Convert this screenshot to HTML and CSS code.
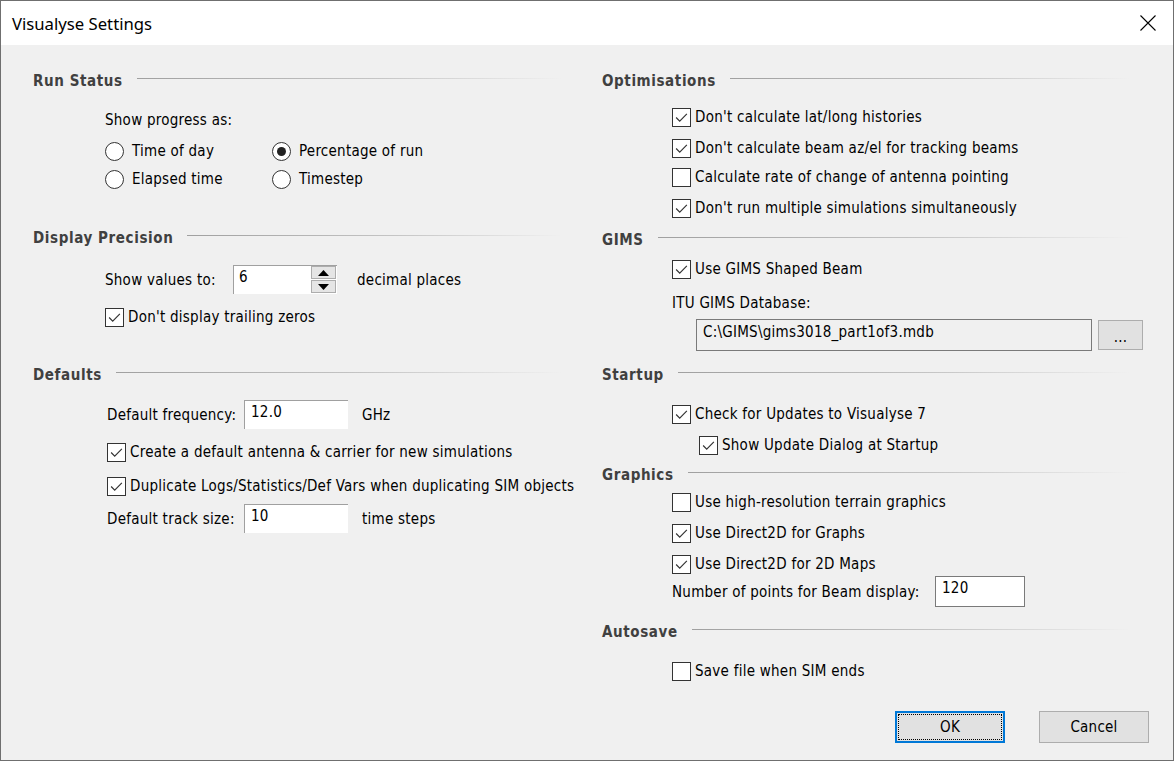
FILE: index.html
```html
<!DOCTYPE html>
<html>
<head>
<meta charset="utf-8">
<title>Visualyse Settings</title>
<link rel="stylesheet" href="styles.css">
</head>
<body>
<div class="window">
  <div class="titlebar">
    <span class="title">Visualyse Settings</span>
    <svg class="close" width="16" height="16" viewBox="0 0 16 16"><path d="M0.5 0.5 L15.5 15.5 M15.5 0.5 L0.5 15.5" stroke="#000" stroke-width="1.1" fill="none"/></svg>
  </div>
  <div class="content">
    <div class="col left">
      <div class="header h-first"><span>Run Status</span><i class="rule"></i></div>
      <div class="row prompt">Show progress as:</div>
      <div class="radio-grid">
        <label class="radio"><span class="circle"></span>Time of day</label>
        <label class="radio"><span class="circle on"></span>Percentage of run</label>
        <label class="radio"><span class="circle"></span>Elapsed time</label>
        <label class="radio"><span class="circle"></span>Timestep</label>
      </div>

      <div class="header h-precision"><span>Display Precision</span><i class="rule"></i></div>
      <div class="field-row values-row">
        <span class="lab lab-values">Show values to:</span>
        <div class="spin">
          <span class="spin-val">6</span>
          <div class="spin-btns">
            <span class="sb"><svg width="11" height="6" viewBox="0 0 11 6"><path d="M5.5 0 L11 6 L0 6 Z" fill="#000"/></svg></span>
            <span class="sb"><svg width="11" height="6" viewBox="0 0 11 6"><path d="M0 0 L11 0 L5.5 6 Z" fill="#000"/></svg></span>
          </div>
        </div>
        <span class="unit unit-dec">decimal places</span>
      </div>
      <label class="cb-row trailing"><span class="box"><svg viewBox="0 0 19 19"><path d="M3.5 9.5 L7.5 13.5 L15.5 5.5" class="tick"/></svg></span>Don't display trailing zeros</label>

      <div class="header h-defaults"><span>Defaults</span><i class="rule"></i></div>
      <div class="defaults">
        <div class="field-row freq-row">
          <span class="lab lab-def">Default frequency:</span>
          <div class="edit sunken">12.0</div>
          <span class="unit">GHz</span>
        </div>
        <label class="cb-row def-cb1"><span class="box"><svg viewBox="0 0 19 19"><path d="M3.5 9.5 L7.5 13.5 L15.5 5.5" class="tick"/></svg></span>Create a default antenna &amp; carrier for new simulations</label>
        <label class="cb-row def-cb2"><span class="box"><svg viewBox="0 0 19 19"><path d="M3.5 9.5 L7.5 13.5 L15.5 5.5" class="tick"/></svg></span>Duplicate Logs/Statistics/Def Vars when duplicating SIM objects</label>
        <div class="field-row track-row">
          <span class="lab lab-def">Default track size:</span>
          <div class="edit sunken">10</div>
          <span class="unit">time steps</span>
        </div>
      </div>
    </div>

    <div class="col right">
      <div class="header h-first"><span>Optimisations</span><i class="rule"></i></div>
      <div class="rbody">
        <label class="cb-row opt1"><span class="box"><svg viewBox="0 0 19 19"><path d="M3.5 9.5 L7.5 13.5 L15.5 5.5" class="tick"/></svg></span>Don't calculate lat/long histories</label>
        <label class="cb-row opt2"><span class="box"><svg viewBox="0 0 19 19"><path d="M3.5 9.5 L7.5 13.5 L15.5 5.5" class="tick"/></svg></span>Don't calculate beam az/el for tracking beams</label>
        <label class="cb-row opt3"><span class="box"></span>Calculate rate of change of antenna pointing</label>
        <label class="cb-row opt4"><span class="box"><svg viewBox="0 0 19 19"><path d="M3.5 9.5 L7.5 13.5 L15.5 5.5" class="tick"/></svg></span>Don't run multiple simulations simultaneously</label>
      </div>

      <div class="header h-gims"><span>GIMS</span><i class="rule"></i></div>
      <div class="rbody">
        <label class="cb-row gims-cb"><span class="box"><svg viewBox="0 0 19 19"><path d="M3.5 9.5 L7.5 13.5 L15.5 5.5" class="tick"/></svg></span>Use GIMS Shaped Beam</label>
        <div class="row itu">ITU GIMS Database:</div>
        <div class="path-row">
          <div class="path">C:\GIMS\gims3018_part1of3.mdb</div>
          <span class="browse">...</span>
        </div>
      </div>

      <div class="header h-startup"><span>Startup</span><i class="rule"></i></div>
      <div class="rbody">
        <label class="cb-row st1"><span class="box"><svg viewBox="0 0 19 19"><path d="M3.5 9.5 L7.5 13.5 L15.5 5.5" class="tick"/></svg></span>Check for Updates to Visualyse 7</label>
        <label class="cb-row st2"><span class="box"><svg viewBox="0 0 19 19"><path d="M3.5 9.5 L7.5 13.5 L15.5 5.5" class="tick"/></svg></span>Show Update Dialog at Startup</label>
      </div>

      <div class="header h-graphics"><span>Graphics</span><i class="rule"></i></div>
      <div class="rbody">
        <label class="cb-row gr1"><span class="box"></span>Use high-resolution terrain graphics</label>
        <label class="cb-row gr2"><span class="box"><svg viewBox="0 0 19 19"><path d="M3.5 9.5 L7.5 13.5 L15.5 5.5" class="tick"/></svg></span>Use Direct2D for Graphs</label>
        <label class="cb-row gr3"><span class="box"><svg viewBox="0 0 19 19"><path d="M3.5 9.5 L7.5 13.5 L15.5 5.5" class="tick"/></svg></span>Use Direct2D for 2D Maps</label>
        <div class="field-row points-row">
          <span class="lab lab-points">Number of points for Beam display:</span>
          <div class="edit boxed">120</div>
        </div>
      </div>

      <div class="header h-autosave"><span>Autosave</span><i class="rule"></i></div>
      <div class="rbody">
        <label class="cb-row as1"><span class="box"></span>Save file when SIM ends</label>
      </div>

      <div class="buttons">
        <button class="btn ok"><span class="focus">OK</span></button>
        <button class="btn">Cancel</button>
      </div>
    </div>
  </div>
</div>
</body>
</html>
```

FILE: styles.css
```css
html, body {
  margin: 0;
  padding: 0;
  background: #f0f0f0;
}
.window {
  width: 1174px;
  height: 761px;
  box-sizing: border-box;
  border: 1px solid #6f6f6f;
  background: #f0f0f0;
  font-family: "DejaVu Sans Condensed", "DejaVu Sans", sans-serif;
  font-size: 15px;
  letter-spacing: 0.25px;
  color: #000;
  overflow: hidden;
}
.titlebar {
  height: 44px;
  background: #fff;
  display: flex;
  align-items: center;
  justify-content: space-between;
  padding: 0 17px 0 11px;
}
.title {
  font-family: "Noto Sans", sans-serif;
  font-size: 16.7px;
  letter-spacing: 0;
  color: #000;
}
.content {
  display: flex;
}
.col {
  display: flex;
  flex-direction: column;
}
.left {
  width: 569px;
  padding-left: 32px;
}
.right {
  width: 548px;
}
.header {
  height: 20px;
  display: flex;
  align-items: center;
  font-weight: bold;
  letter-spacing: 0.6px;
  color: #404040;
}
.header span {
  white-space: nowrap;
}
.rule {
  flex: 1;
  height: 1px;
  margin-left: 14px;
  margin-top: -5px;
  background: linear-gradient(to right, #a0a0a0, #c4c4c4 55%, #f0f0f0);
}
.left .rule { margin-right: 40px; }
.right .rule { margin-right: 20px; }
.h-first { margin-top: 26px; }
.row {
  height: 24px;
  display: flex;
  align-items: center;
}
.prompt { margin-top: 17px; padding-left: 72px; }
.radio-grid {
  margin-top: 7px;
  padding-left: 72px;
  display: grid;
  grid-template-columns: 167px auto;
  grid-auto-rows: 24px;
  row-gap: 4px;
}
.radio {
  display: flex;
  align-items: center;
  white-space: nowrap;
}
.circle {
  width: 19px;
  height: 19px;
  box-sizing: border-box;
  border: 1px solid #333;
  border-radius: 50%;
  background: #fff;
  margin-right: 8px;
  display: flex;
  align-items: center;
  justify-content: center;
}
.circle.on::after {
  content: "";
  width: 9px;
  height: 9px;
  border-radius: 50%;
  background: #222;
}
.h-precision { margin-top: 37px; }
.field-row {
  display: flex;
  align-items: center;
  white-space: nowrap;
}
.values-row { margin-top: 17px; padding-left: 72px; height: 29px; }
.lab-values { width: 128px; }
.spin {
  width: 104px;
  height: 29px;
  box-sizing: border-box;
  background: #fff;
  border-top: 1px solid #a0a0a0;
  border-left: 1px solid #a0a0a0;
  display: flex;
  justify-content: space-between;
}
.spin-val { padding: 2px 0 0 5px; line-height: 18px; }
.spin-btns {
  display: flex;
  flex-direction: column;
  gap: 1px;
  padding: 0 1px 0 0;
}
.sb {
  width: 25px;
  height: 13px;
  box-sizing: border-box;
  background: #e5e5e5;
  border: 1px solid #adadad;
  display: flex;
  align-items: center;
  justify-content: center;
}
.sb svg { display: block; }
.unit { margin-left: 14px; }
.unit-dec { margin-left: 20px; }
.cb-row {
  height: 24px;
  display: flex;
  align-items: center;
  white-space: nowrap;
}
.box {
  width: 19px;
  height: 19px;
  box-sizing: border-box;
  border: 1px solid #333;
  background: #fff;
  margin-right: 4px;
  flex: none;
}
.box svg { display: block; width: 17px; height: 17px; }
.tick {
  fill: none;
  stroke: #333;
  stroke-width: 1.3;
}
.trailing { margin-top: 11px; padding-left: 72px; }
.h-defaults { margin-top: 36px; }
.defaults { padding-left: 74px; display: flex; flex-direction: column; }
.freq-row { margin-top: 15px; height: 29px; }
.lab-def { width: 137px; }
.edit {
  width: 104px;
  height: 29px;
  box-sizing: border-box;
  background: #fff;
  padding: 2px 0 0 6px;
  line-height: 18px;
}
.sunken {
  border-top: 1px solid #a0a0a0;
  border-left: 1px solid #a0a0a0;
}
.def-cb1 { margin-top: 11px; }
.def-cb2 { margin-top: 10px; }
.track-row { margin-top: 6px; height: 29px; }

.rbody { padding-left: 70px; display: flex; flex-direction: column; }
.opt1 { margin-top: 14px; }
.opt2 { margin-top: 7px; }
.opt3 { margin-top: 5px; }
.opt4 { margin-top: 7px; }
.h-gims { margin-top: 10px; }
.gims-cb { margin-top: 7px; }
.itu { margin-top: 10px; }
.path-row {
  margin-top: 4px;
  padding-left: 24px;
  display: flex;
  align-items: center;
  gap: 6px;
}
.path {
  width: 396px;
  height: 32px;
  box-sizing: border-box;
  border: 1px solid #7a7a7a;
  background: #f0f0f0;
  padding: 3px 0 0 6px;
  line-height: 18px;
}
.browse {
  width: 45px;
  height: 30px;
  box-sizing: border-box;
  border: 1px solid #adadad;
  background: #e1e1e1;
  display: flex;
  align-items: center;
  justify-content: center;
  padding-top: 4px;
}
.h-startup { margin-top: 14px; }
.st1 { margin-top: 17px; }
.st2 { margin-top: 7px; padding-left: 27px; }
.h-graphics { margin-top: 8px; }
.gr1 { margin-top: 5px; }
.gr2 { margin-top: 7px; }
.gr3 { margin-top: 7px; }
.points-row { height: 31px; }
.lab-points { width: 263px; }
.edit.boxed {
  width: 90px;
  height: 31px;
  border: 1px solid #7a7a7a;
}
.h-autosave { margin-top: 15px; }
.as1 { margin-top: 17px; }
.buttons {
  margin-top: 28px;
  display: flex;
  justify-content: flex-end;
  gap: 34px;
  padding-right: 1px;
}
.btn {
  width: 110px;
  height: 32px;
  box-sizing: border-box;
  border: 1px solid #adadad;
  background: #e1e1e1;
  font-family: inherit;
  font-size: 15px;
  letter-spacing: 0.25px;
  color: #000;
  padding: 0;
  display: flex;
  align-items: center;
  justify-content: center;
}
.btn.ok {
  border: 2px solid #0078d7;
  padding: 1px;
}
.focus {
  width: 100%;
  height: 100%;
  box-sizing: border-box;
  border: 1px dotted #000;
  display: flex;
  align-items: center;
  justify-content: center;
}
```
